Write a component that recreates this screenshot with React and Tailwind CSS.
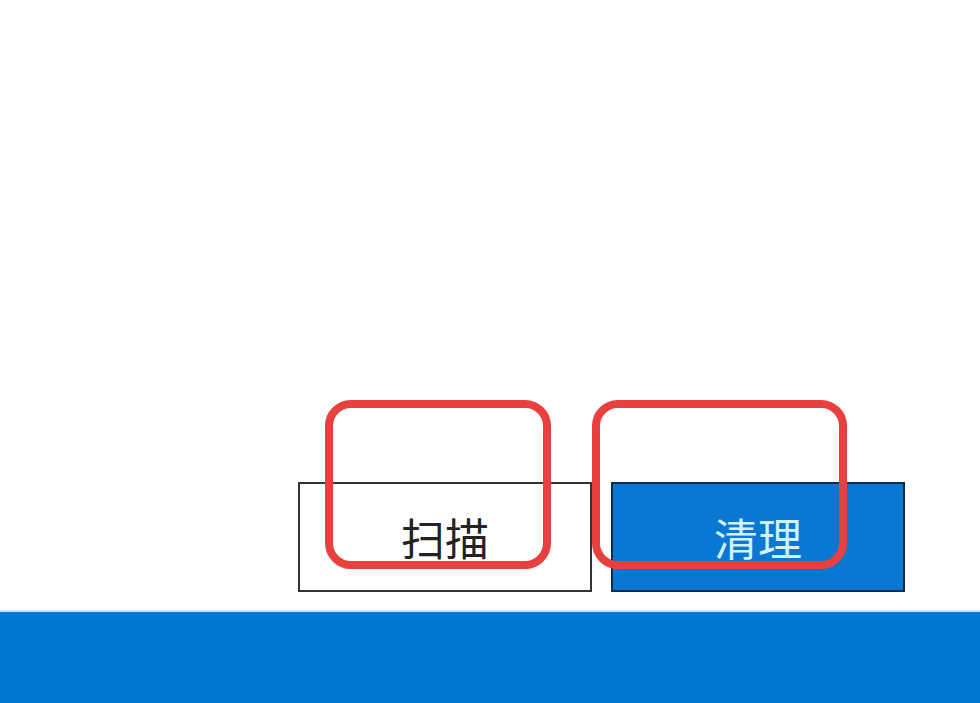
import React from 'react';

const Annotation = ({ className = '' }) => (
  <div className={`absolute rounded-[26px] border-[8px] border-[#e8403f] pointer-events-none ${className}`} />
);

const App = () => {
  return (
    <div
      className="relative w-[980px] h-[703px] bg-white flex flex-col overflow-hidden"
      style={{ fontFamily: '"Noto Sans CJK SC", "Noto Sans", sans-serif' }}
    >
      <div className="flex-1" />

      {/* Action buttons */}
      <div className="flex justify-end gap-[19px] pr-[75px] mb-[18px]">
        <button className="w-[294px] h-[110px] border-2 border-[#333] bg-white flex items-center justify-center text-[44px] leading-none text-[#222]">
          扫描
        </button>
        <button className="w-[294px] h-[110px] border-2 border-[#0d2c4c] bg-[#0a78d2] flex items-center justify-center text-[44px] leading-none text-[#d2f2ff]">
          清理
        </button>
      </div>

      {/* Taskbar */}
      <div className="h-[93px] bg-[#0078d4] border-t-2 border-[#bfe4fb]" />

      {/* Red highlight marks */}
      <Annotation className="left-[325px] top-[400px] w-[226px] h-[169px]" />
      <Annotation className="left-[592px] top-[400px] w-[255px] h-[169px]" />
    </div>
  );
};

export default App;
